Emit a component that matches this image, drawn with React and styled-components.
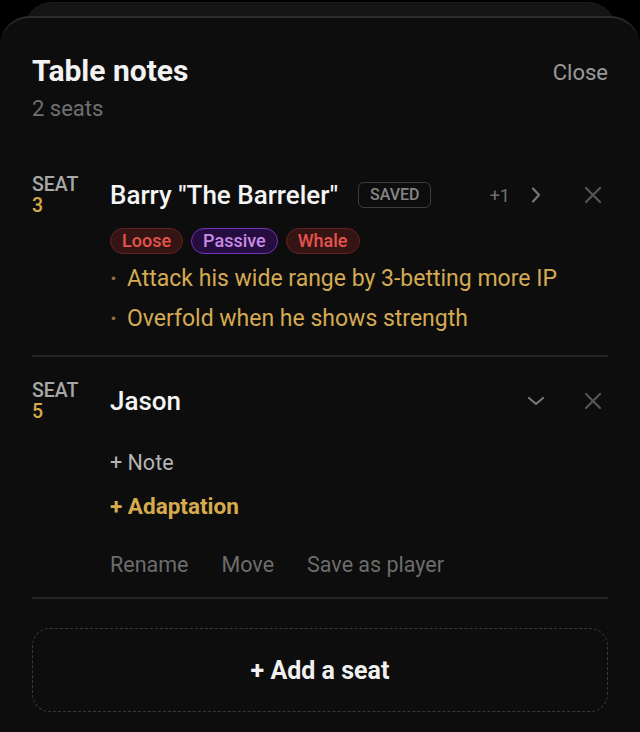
import React from 'react'
import styled, { createGlobalStyle } from 'styled-components'

const Global = createGlobalStyle`
  html, body {
    margin: 0;
    background: #000;
    font-family: Roboto, "Noto Sans", sans-serif;
  }
`

const Screen = styled.div`
  width: 640px;
  height: 732px;
  overflow: hidden;
  background: #000;
  padding-top: 2px;
  box-sizing: border-box;
`

const BackSheet = styled.div`
  margin: 0 24px;
  height: 40px;
  border-radius: 28px 28px 0 0;
  background: #141414;
  border-top: 1px solid #1c1c1c;
  margin-bottom: -27px;
`

const Sheet = styled.div`
  position: relative;
  background: #0d0d0d;
  border-top: 2px solid #2b2b2b;
  border-radius: 30px 30px 0 0;
  padding: 34px 32px 0 32px;
  height: 720px;
  box-sizing: border-box;
`

const Header = styled.div`
  display: flex;
  justify-content: space-between;
  align-items: flex-start;
`

const Title = styled.h1`
  margin: 0;
  font-size: 30px;
  font-weight: 700;
  color: #f2f2f2;
  line-height: 38px;
`

const CloseBtn = styled.span`
  font-size: 22px;
  color: #9a9a9a;
  line-height: 38px;
  margin-top: 2px;
`

const Subtitle = styled.div`
  font-size: 22px;
  color: #707070;
  margin-top: 2px;
  line-height: 30px;
`

const SeatRow = styled.div`
  display: flex;
  padding: ${p => p.$pad};
  border-bottom: 2px solid #242424;
`

const SeatLabel = styled.div`
  width: 78px;
  flex-shrink: 0;
  font-size: 19.5px;
  line-height: 21px;
  color: #a8a8a8;
  font-weight: 500;
  span {
    display: block;
    color: #d6aa4c;
  }
`

const SeatBody = styled.div`
  flex: 1;
  display: flex;
  flex-direction: column;
`

const NameLine = styled.div`
  display: flex;
  align-items: center;
  height: 42px;
  padding-right: 5px;
`

const Name = styled.div`
  font-size: 26px;
  font-weight: 500;
  color: #f4f4f4;
`

const SavedBadge = styled.span`
  margin-left: 20px;
  border: 1.5px solid #3d3d3d;
  border-radius: 6px;
  padding: 2px 11px;
  font-size: 16px;
  font-weight: 500;
  color: #858585;
  line-height: 20px;
`

const Spacer = styled.div`
  flex: 1;
`

const Extra = styled.span`
  font-size: 18px;
  color: #6f6f6f;
  margin-right: 16px;
`

const IconBtn = styled.span`
  display: flex;
  align-items: center;
  justify-content: center;
  width: 20px;
  margin-left: ${p => p.$ml || 0}px;
  color: ${p => p.$color || '#777'};
`

const Tags = styled.div`
  display: flex;
  gap: 8px;
  margin-top: 12px;
`

const Tag = styled.span`
  font-size: 18px;
  font-weight: 500;
  line-height: 24px;
  padding: 0 11px;
  border-radius: 14px;
  color: ${p => p.$fg};
  background: ${p => p.$bg};
  border: 1.5px solid ${p => p.$bd};
`

const Bullets = styled.ul`
  list-style: none;
  margin: 5px 0 0;
  padding: 0;
`

const Bullet = styled.li`
  font-size: 23px;
  line-height: 40px;
  color: #d4aa52;
  &::before {
    content: '·';
    color: #8a7040;
    margin-right: 10px;
    font-weight: 700;
  }
`

const AddNote = styled.div`
  font-size: 21.5px;
  line-height: 25px;
  color: #b5b5b5;
  margin-top: 28px;
`

const AddAdapt = styled.div`
  font-size: 22.5px;
  line-height: 25px;
  font-weight: 700;
  color: #d6ab4e;
  margin-top: 19px;
`

const Actions = styled.div`
  display: flex;
  gap: 33px;
  margin-top: 33px;
  font-size: 21.5px;
  line-height: 25px;
  color: #6c6c6c;
`

const AddSeat = styled.div`
  margin-top: 29px;
  height: 84px;
  border: 1.5px dashed #3a3a3a;
  border-radius: 18px;
  display: flex;
  align-items: center;
  justify-content: center;
  font-size: 25px;
  font-weight: 700;
  color: #f0f0f0;
  box-sizing: border-box;
`

const Chevron = ({ dir }) =>
  dir === 'right' ? (
    <svg width="12" height="18" viewBox="0 0 12 18" fill="none" stroke="currentColor" strokeWidth="2.2" strokeLinecap="round" strokeLinejoin="round">
      <path d="M3 2.5l6 6.5-6 6.5" />
    </svg>
  ) : (
    <svg width="18" height="10" viewBox="0 0 18 10" fill="none" stroke="currentColor" strokeWidth="2.2" strokeLinecap="round" strokeLinejoin="round">
      <path d="M2 2l7 6 7-6" />
    </svg>
  )

const Cross = () => (
  <svg width="18" height="18" viewBox="0 0 18 18" fill="none" stroke="currentColor" strokeWidth="2.2" strokeLinecap="round">
    <path d="M2 2l14 14M16 2L2 16" />
  </svg>
)

const tagColors = {
  red: { fg: '#e5544c', bg: '#351414', bd: '#632222' },
  purple: { fg: '#c88ae6', bg: '#250d40', bd: '#7433b8' },
}

export default function App() {
  return (
    <Screen>
      <Global />
      <BackSheet />
      <Sheet>
        <Header>
          <Title>Table notes</Title>
          <CloseBtn>Close</CloseBtn>
        </Header>
        <Subtitle>2 seats</Subtitle>

        <SeatRow $pad="50px 0 16px">
          <SeatLabel>SEAT<span>3</span></SeatLabel>
          <SeatBody>
            <NameLine>
              <Name>Barry "The Barreler"</Name>
              <SavedBadge>SAVED</SavedBadge>
              <Spacer />
              <Extra>+1</Extra>
              <IconBtn><Chevron dir="right" /></IconBtn>
              <IconBtn $ml={37} $color="#565656"><Cross /></IconBtn>
            </NameLine>
            <Tags>
              <Tag $fg={tagColors.red.fg} $bg={tagColors.red.bg} $bd={tagColors.red.bd}>Loose</Tag>
              <Tag $fg={tagColors.purple.fg} $bg={tagColors.purple.bg} $bd={tagColors.purple.bd}>Passive</Tag>
              <Tag $fg={tagColors.red.fg} $bg={tagColors.red.bg} $bd={tagColors.red.bd}>Whale</Tag>
            </Tags>
            <Bullets>
              <Bullet>Attack his wide range by 3-betting more IP</Bullet>
              <Bullet>Overfold when he shows strength</Bullet>
            </Bullets>
          </SeatBody>
        </SeatRow>

        <SeatRow $pad="23px 0 20px">
          <SeatLabel>SEAT<span>5</span></SeatLabel>
          <SeatBody>
            <NameLine>
              <Name>Jason</Name>
              <Spacer />
              <IconBtn><Chevron dir="down" /></IconBtn>
              <IconBtn $ml={37} $color="#565656"><Cross /></IconBtn>
            </NameLine>
            <AddNote>+ Note</AddNote>
            <AddAdapt>+ Adaptation</AddAdapt>
            <Actions>
              <span>Rename</span>
              <span>Move</span>
              <span>Save as player</span>
            </Actions>
          </SeatBody>
        </SeatRow>

        <AddSeat>+ Add a seat</AddSeat>
      </Sheet>
    </Screen>
  )
}
